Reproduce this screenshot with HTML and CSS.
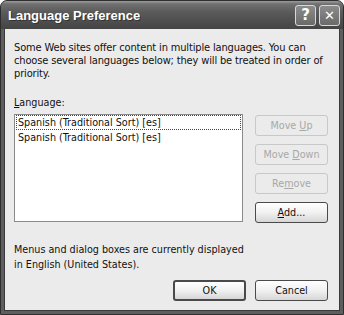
FILE: index.html
```html
<!DOCTYPE HTML>
<html lang="en-US">
<head>
<meta charset="UTF-8">
<title>Language Preference</title>
<link rel="stylesheet" href="styles.css">
</head>
<body>
<div class="window">
	<div class="titlebar">
		<span class="title">Language Preference</span>
		<span class="tbtn">?</span>
		<span class="tbtn close">&#x2715;</span>
	</div>
	<div class="client">
		<p class="intro">Some Web sites offer content in multiple languages. You can<br>choose several languages below; they will be treated in order of<br>priority.</p>
		<p class="label"><u>L</u>anguage:</p>
		<div class="row">
			<ul class="list">
				<li class="focus">Spanish (Traditional Sort) [es]</li>
				<li>Spanish (Traditional Sort) [es]</li>
			</ul>
			<div class="side">
				<button class="btn off">Move <u>U</u>p</button>
				<button class="btn off">Move <u>D</u>own</button>
				<button class="btn off">Re<u>m</u>ove</button>
				<button class="btn"><u>A</u>dd...</button>
			</div>
		</div>
		<p class="note">Menus and dialog boxes are currently displayed<br>in English (United States).</p>
		<div class="actions">
			<button class="btn default">OK</button>
			<button class="btn">Cancel</button>
		</div>
	</div>
</div>
</body>
</html>
```

FILE: styles.css
```css
html, body, p, ul, li, button { margin:0; padding:0; }
body { background:#fff; font:normal 10.7px "DejaVu Sans Condensed","DejaVu Sans",Tahoma,sans-serif; font-stretch:condensed; color:#111; }
ul li { list-style:none; }
.window { width:344px; height:315px; box-sizing:border-box; display:flex; flex-direction:column; background:#5e5e5e; border:1px solid #2e2e2e; border-radius:7px 7px 0 0; padding:0 3px 3px; }
.titlebar { height:28px; margin:0 -3px; display:flex; align-items:center; padding:0 3px 0 7px; gap:3px; border-radius:6px 6px 0 0; background:linear-gradient(#9c9c9c 0, #707070 3px, #5a5a5a 40%, #444 100%); }
.title { flex:1; font:bold 13px "Liberation Sans",Arial,sans-serif; color:#fff; text-shadow:1px 1px 0 #333; }
.tbtn { width:19px; height:19px; display:flex; align-items:center; justify-content:center; border:1px solid #d8d8d8; border-radius:3px; background:linear-gradient(#8c8c8c, #6a6a6a); color:#fff; font:bold 15px "DejaVu Sans",sans-serif; }
.close { font-size:13px; }
.client { flex:1; background:#ebebeb; border:1px solid #3a3a3a; border-top:0; padding:12px 11px 0 9px; }
.intro { line-height:13px; font-size:11px; letter-spacing:-0.15px; white-space:nowrap; }
.label { margin-top:16px; line-height:13px; }
.row { display:flex; margin-top:5px; }
.list { width:230px; height:108px; box-sizing:border-box; border:1px solid #8a8a8a; background:#fff; padding:0 1px; }
.list li { line-height:13px; padding-left:1px; border:1px solid transparent; }
.list li.focus { border:1px dotted #444; }
.side { display:flex; flex-direction:column; gap:8px; margin:1px 0 0 12px; }
.btn { width:73px; height:21px; box-sizing:border-box; font:inherit; color:#111; border:1px solid #4a4a4a; border-radius:3px; background:linear-gradient(#fff 0, #f1f1f1 50%, #d6d6d6 100%); }
.btn.off { color:#a8a8a8; border-color:#c8c8c8; background:#ebebeb; }
.btn.default { border:2px solid #4a4a4a; }
.note { margin-top:19px; line-height:15px; }
.actions { display:flex; justify-content:flex-end; gap:9px; margin-top:8px; }
```
